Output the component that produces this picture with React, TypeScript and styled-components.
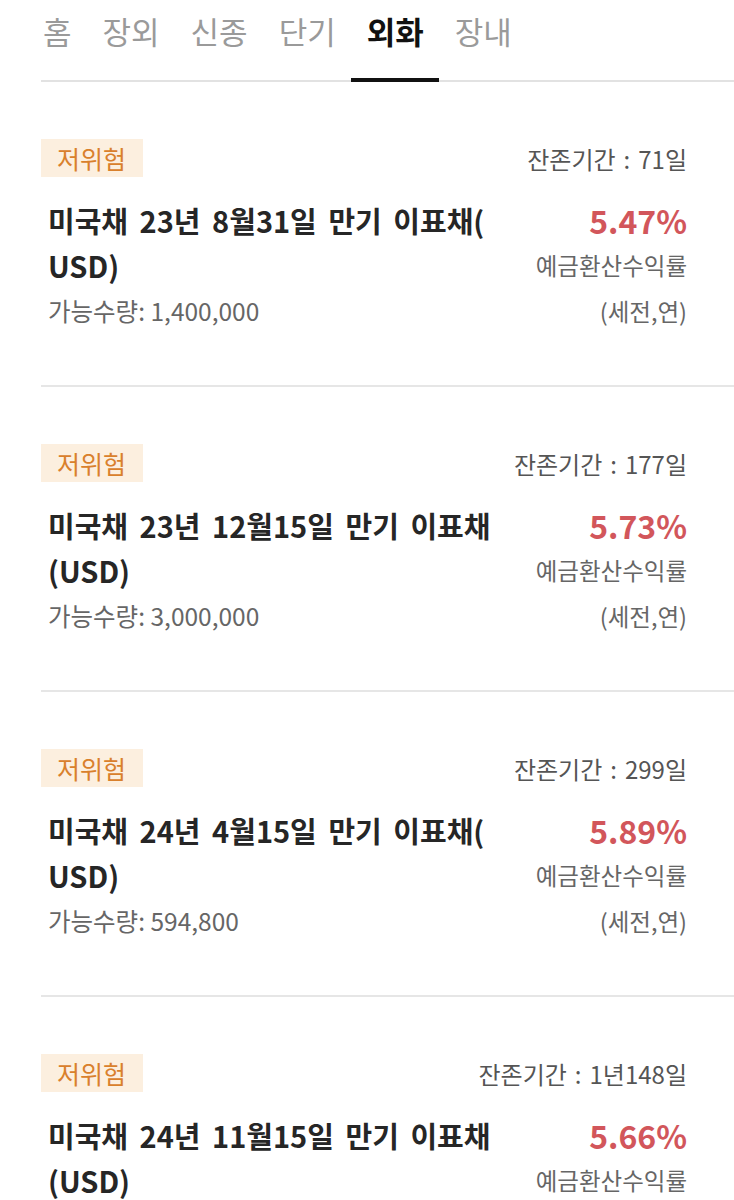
import React from 'react';
import styled, { createGlobalStyle } from 'styled-components';

const GlobalStyle = createGlobalStyle`
  body {
    margin: 0;
    background: #fff;
    font-family: 'Noto Sans CJK KR', 'Noto Sans', sans-serif;
  }
`;

const Page = styled.div`
  padding-left: 41px;
  overflow: hidden;
`;

const TabBar = styled.div`
  display: flex;
  align-items: flex-end;
  padding-top: 8px;
  border-bottom: 2px solid #e2e2e2;
`;

const Tab = styled.div<{ active: boolean }>`
  padding: 0 15px 25px 16px;
  margin-bottom: -2px;
  font-size: 31px;
  line-height: 45px;
  font-weight: ${({ active }) => (active ? 700 : 400)};
  color: ${({ active }) => (active ? '#111' : '#9a9a9a')};
  border-bottom: 4px solid ${({ active }) => (active ? '#111' : 'transparent')};
  &:first-child {
    padding-left: 2px;
  }
`;

const Card = styled.div`
  padding: 57px 47px 51px 0;
  border-bottom: 2px solid #e6e6e6;
`;

const TopRow = styled.div`
  display: flex;
  justify-content: space-between;
  align-items: center;
`;

const Badge = styled.span`
  background: #fcefdf;
  color: #d9802c;
  font-size: 25px;
  line-height: 38px;
  padding: 0 17px 0 16px;
`;

const Remain = styled.span`
  font-size: 24px;
  color: #555;
`;

const Colon = styled.span`
  margin: 0 8px;
`;

const Body = styled.div`
  display: flex;
  justify-content: space-between;
  margin-top: 21px;
`;

const Left = styled.div`
  padding-left: 7px;
`;

const Title = styled.div`
  font-size: 29px;
  line-height: 45px;
  font-weight: 700;
  word-spacing: 5px;
  color: #262626;
  white-space: nowrap;
`;

const Qty = styled.div`
  font-size: 24.5px;
  line-height: 46px;
  color: #666;
`;

const Right = styled.div`
  display: flex;
  flex-direction: column;
  align-items: flex-end;
`;

const Rate = styled.div`
  font-size: 32px;
  line-height: 45px;
  font-weight: 700;
  color: #d2565b;
`;

const Note = styled.div<{ tall?: boolean }>`
  font-size: 23.5px;
  line-height: ${({ tall }) => (tall ? '46px' : '45px')};
  color: #666;
`;

const tabs = ['홈', '장외', '신종', '단기', '외화', '장내'];

const bonds = [
  {
    remain: '71일',
    title: ['미국채 23년 8월31일 만기 이표채(', 'USD)'],
    qty: '1,400,000',
    rate: '5.47%',
  },
  {
    remain: '177일',
    title: ['미국채 23년 12월15일 만기 이표채', '(USD)'],
    qty: '3,000,000',
    rate: '5.73%',
  },
  {
    remain: '299일',
    title: ['미국채 24년 4월15일 만기 이표채(', 'USD)'],
    qty: '594,800',
    rate: '5.89%',
  },
  {
    remain: '1년148일',
    title: ['미국채 24년 11월15일 만기 이표채', '(USD)'],
    qty: '1,000,000',
    rate: '5.66%',
  },
];

function App() {
  return (
    <Page>
      <GlobalStyle />
      <TabBar>
        {tabs.map((t) => (
          <Tab key={t} active={t === '외화'}>
            {t}
          </Tab>
        ))}
      </TabBar>
      {bonds.map((b) => (
        <Card key={b.rate}>
          <TopRow>
            <Badge>저위험</Badge>
            <Remain>
              잔존기간<Colon>:</Colon>
              {b.remain}
            </Remain>
          </TopRow>
          <Body>
            <Left>
              {b.title.map((line) => (
                <Title key={line}>{line}</Title>
              ))}
              <Qty>가능수량: {b.qty}</Qty>
            </Left>
            <Right>
              <Rate>{b.rate}</Rate>
              <Note>예금환산수익률</Note>
              <Note tall>(세전,연)</Note>
            </Right>
          </Body>
        </Card>
      ))}
    </Page>
  );
}

export default App;
